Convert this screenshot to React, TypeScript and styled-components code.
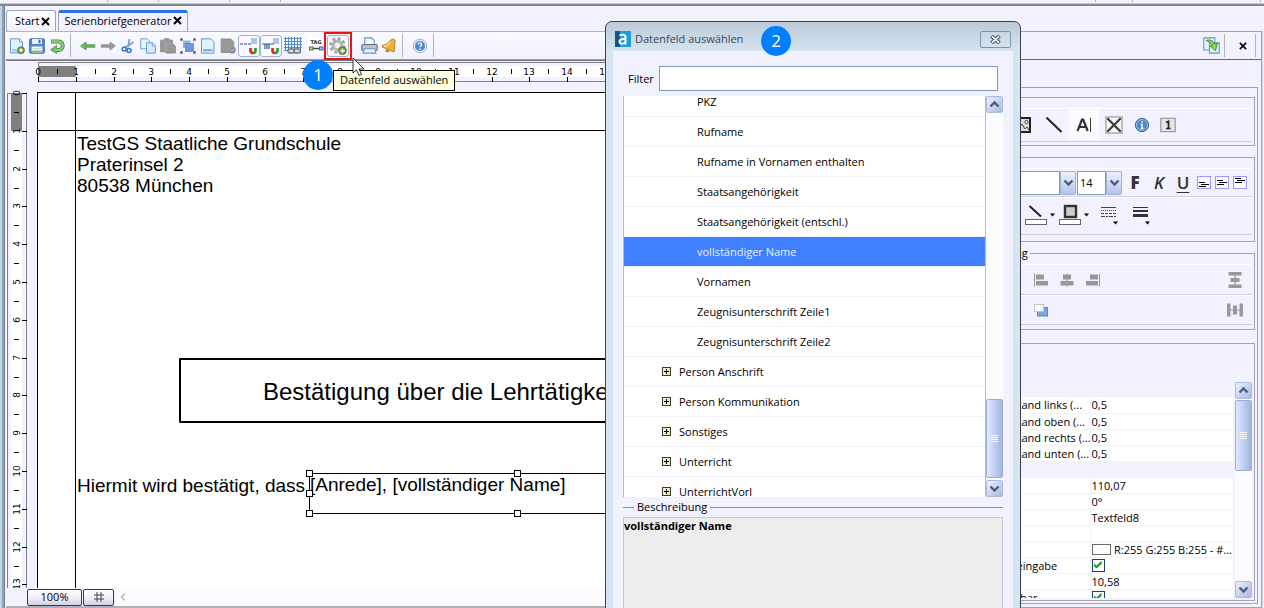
import React from 'react';
import styled, { createGlobalStyle, css } from 'styled-components';

const UI = '"Open Sans", "Noto Sans", sans-serif';
const PANE = '#f2f2ff';
const EDGE = '#94a6be';

const Global = createGlobalStyle`
  * { box-sizing: border-box; }
  body { margin: 0; background: ${PANE}; color: #000; font: 11px/16px ${UI}; overflow: hidden; }
  button, input, select { font: inherit; color: inherit; margin: 0; padding: 0; }
  button { border: 0; background: none; display: inline-flex; align-items: center; justify-content: center; }
  svg { display: block; flex: none; }
  ul { list-style: none; margin: 0; padding: 0; }
`;

/* ---------- window frame ---------- */

const Window = styled.div`
  position: relative;
  display: flex;
  flex-direction: column;
  height: 100vh;
  overflow: hidden;
`;

const MenuStrip = styled.div`
  flex: none;
  display: flex;
  height: 6px;
  padding-left: 107px;
  border-bottom: 2px solid #85858c;
  box-shadow: inset 0 -1px #c4c4cc;
`;

const StripTick = styled.span<{ $gap: number }>`
  flex: none;
  width: 1px;
  height: 2px;
  margin-right: ${(p) => p.$gap}px;
  background: #b4b4bc;
`;

const Frame = styled.div`
  flex: 1;
  min-height: 0;
  display: flex;
  flex-direction: column;
  border-left: 2px solid #bcd4ec;
  box-shadow: inset 2px 0 #8fa3b8, inset 3px 0 #7d7d86;
  padding-left: 4px;
`;

const TabBar = styled.nav`
  flex: none;
  display: flex;
  align-items: flex-end;
  gap: 2px;
  height: 25px;
`;

const Tab = styled.div<{ $active?: boolean }>`
  display: flex;
  align-items: center;
  gap: 1px;
  height: 21px;
  padding: 0 4px 0 8px;
  border: 1px solid ${EDGE};
  border-bottom: 0;
  border-radius: 3px 3px 0 0;
  background: linear-gradient(#ffffff, #f0f0fa);
  ${(p) =>
    p.$active &&
    css`
      padding: 0 4px 3px 5px;
      border-top: 3px solid #2f6fe8;
      background: ${PANE};
    `}
`;

const Main = styled.div`
  flex: 1;
  min-height: 0;
  display: flex;
`;

const Editor = styled.section`
  flex: 1;
  min-width: 0;
  display: flex;
  flex-direction: column;
  border-top: 1px solid #a3b8d0;
`;

/* ---------- toolbar ---------- */

const Toolbar = styled.div`
  flex: none;
  display: flex;
  align-items: center;
  height: 28px;
  padding-left: 1px;
  border-bottom: 1px solid #9a9aa2;
  background: linear-gradient(#fafaff, ${PANE});
`;

const ToolButton = styled.button<{ $w?: number; $framed?: boolean }>`
  flex: none;
  width: ${(p) => p.$w ?? 20}px;
  height: 22px;
  ${(p) =>
    p.$framed &&
    css`
      border: 1px solid #9fb2cc;
      border-radius: 3px;
      background: #fbfbff;
    `}
`;

const ToolSep = styled.span<{ $before?: number; $after?: number }>`
  flex: none;
  width: 1px;
  height: 23px;
  margin: 0 ${(p) => p.$after ?? 7}px 0 ${(p) => p.$before ?? 3}px;
  background: #b2b2ba;
`;

const Highlight = styled.div`
  position: relative;
  flex: none;
  display: flex;
  align-items: center;
  justify-content: center;
  width: 28px;
  height: 28px;
  margin: 0 7px 0 -3px;
  border: 2px solid #ee1111;
`;

const Tooltip = styled.div`
  position: absolute;
  z-index: 3;
  top: 36px;
  left: 7px;
  height: 21px;
  padding: 0 6px;
  border: 1px solid #000;
  background: #ffffe1;
  line-height: 18px;
  white-space: nowrap;
`;

const Badge = styled.span<{ $left: number; $top: number }>`
  position: absolute;
  z-index: 4;
  left: ${(p) => p.$left}px;
  top: ${(p) => p.$top}px;
  width: 30px;
  height: 30px;
  border-radius: 50%;
  background: #0080ff;
  color: #fff;
  font-size: 17px;
  line-height: 29px;
  text-align: center;
`;

const Pointer = styled.svg`
  position: absolute;
  z-index: 5;
  top: 23px;
  left: 26px;
`;

/* ---------- document ---------- */

const Sheet = styled.div`
  flex: 1;
  min-height: 0;
  display: grid;
  grid-template: 31px 1fr / 31px 1fr;
  border-top: 1px solid #77777f;
  overflow: hidden;
`;

const RulerSvg = styled.svg`
  overflow: visible;
  font-family: "DejaVu Sans", sans-serif;
  font-size: 9px;
`;

const Paper = styled.div`
  position: relative;
  z-index: 1;
  border: 1px solid #000;
  border-width: 1px 0 0 1px;
  background: #fff;
  font-family: "Liberation Sans", Arial, sans-serif;
  font-size: 19px;
  line-height: 21px;
  overflow: hidden;
  white-space: nowrap;
`;

const Guide = styled.span<{ $vertical?: boolean }>`
  position: absolute;
  background: #000;
  ${(p) =>
    p.$vertical ? 'left: 37px; top: 0; bottom: 0; width: 1px;' : 'top: 37px; left: 0; right: 0; height: 1px;'}
`;

const DocField = styled.div<{ $x: number; $y: number }>`
  position: absolute;
  left: ${(p) => p.$x}px;
  top: ${(p) => p.$y}px;
`;

const TitleField = styled(DocField)`
  width: 560px;
  height: 65px;
  padding-left: 82px;
  border: 2px solid #000;
  border-radius: 1px;
  font-size: 24px;
  line-height: 64px;
`;

const SelectedField = styled(DocField)`
  width: 417px;
  height: 41px;
  border: 1px solid #000;
`;

const Handle = styled.span<{ $col: number; $row: number }>`
  position: absolute;
  left: ${(p) => p.$col * 208 - 4}px;
  top: ${(p) => p.$row * 20 - 4}px;
  width: 7px;
  height: 7px;
  border: 1px solid #000;
  background: #fff;
`;

const StatusBar = styled.div`
  flex: none;
  display: flex;
  align-items: center;
  height: 20px;
  padding-left: 21px;
  border-bottom: 2px solid #b0b0bb;
  background: linear-gradient(90deg, ${PANE} 110px, #fbfbfe 110px);
`;

const StatusButton = styled.button<{ $w: number }>`
  width: ${(p) => p.$w}px;
  height: 17px;
  margin-right: 1px;
  border: 1px solid #1c3f78;
  border-radius: 2px;
  background: linear-gradient(#ffffff, #ececf6 60%, #cfcfe0);
`;

/* ---------- scroll bars ---------- */

const ScrollTrack = styled.div`
  flex: none;
  display: flex;
  flex-direction: column;
  width: 17px;
  background: #fcfcff;
`;

const ScrollButton = styled.button`
  height: 17px;
  border: 1px solid #a9bbdf;
  border-radius: 2px;
  background: linear-gradient(135deg, #eef2ff, #a9b8de);
`;

const ScrollThumb = styled.div<{ $before: string; $height: number }>`
  height: ${(p) => p.$height}px;
  margin: ${(p) => p.$before} 0 2px;
  display: flex;
  align-items: center;
  justify-content: center;
  border: 1px solid #98add8;
  border-radius: 2px;
  background: linear-gradient(90deg, #e3eafe, #c3d1f8 45%, #a5b4d6);
`;

/* ---------- side panel ---------- */

const Side = styled.aside`
  flex: none;
  width: 302px;
  margin-right: 2px;
  display: flex;
  flex-direction: column;
  border: 1px solid ${EDGE};
  border-left: 0;
  box-shadow: 1px 0 #cfd6e2;
`;

const SideHeader = styled.header`
  flex: none;
  display: flex;
  align-items: center;
  justify-content: flex-end;
  height: 28px;
  padding-right: 5px;
  border-bottom: 1px solid #66666c;
`;

const SideBody = styled.div`
  flex: 1;
  min-height: 0;
  display: flex;
  flex-direction: column;
  gap: 11px;
  margin: 27px 3px 3px 4px;
  padding: 9px 2px 2px 2px;
  border: 1px solid ${EDGE};
`;

const Group = styled.fieldset<{ $h?: number }>`
  flex: ${(p) => (p.$h ? 'none' : '1')};
  height: ${(p) => (p.$h ? p.$h + 'px' : 'auto')};
  min-height: 0;
  min-width: 0;
  margin: ${(p) => (p.$h ? 0 : 2)}px 0 0;
  padding: 10px 2px 2px 1px;
  border: 1px solid #a4a4b0;
  position: relative;
  display: flex;
  flex-direction: column;
`;

/* sits over the border line of its group */
const GroupName = styled.span`
  position: absolute;
  top: -9px;
  left: -4px;
  padding: 0 2px;
  background: ${PANE};
`;

const ToolRow = styled.div<{ $h: number }>`
  flex: none;
  display: flex;
  align-items: center;
  height: ${(p) => p.$h}px;
  border-top: 1px solid #fff;
  border-bottom: 1px solid #d0d0df;
`;

const Spring = styled.span`
  flex: 1;
`;

const Cell = styled.button<{ $w: number; $lit?: boolean }>`
  flex: none;
  width: ${(p) => p.$w}px;
  height: 30px;
  background: ${(p) => (p.$lit ? '#fbfbff' : 'none')};
`;

const Letter = styled(Cell)<{ $kind: 'bold' | 'italic' | 'underline' }>`
  color: #333;
  font-size: 17px;
  font-weight: ${(p) => (p.$kind === 'bold' ? 800 : 600)};
  font-style: ${(p) => (p.$kind === 'italic' ? 'italic' : 'normal')};
  text-decoration: ${(p) => (p.$kind === 'underline' ? 'underline' : 'none')};
  text-underline-offset: 3px;
`;

const Combo = styled.label<{ $w: number }>`
  flex: none;
  display: flex;
  width: ${(p) => p.$w}px;
  height: 24px;
  margin-right: 1px;
`;

const ComboSelect = styled.select`
  flex: 1;
  min-width: 0;
  appearance: none;
  border: 1px solid #7f9db9;
  border-radius: 0;
  background: #fff;
  padding-left: 2px;
`;

const ComboArrow = styled.span`
  width: 16px;
  display: flex;
  align-items: center;
  justify-content: center;
  border: 1px solid #9fb2d8;
  border-radius: 2px;
  background: linear-gradient(#eef2ff, #b4c2e4);
`;

const PropArea = styled.div`
  flex: 1;
  min-height: 0;
  display: flex;
  gap: 2px;
  margin-top: 28px;
`;

const PropViewport = styled.div`
  flex: 1;
  min-width: 0;
  overflow: hidden;
`;

const PropTable = styled.table`
  width: 100%;
  margin-top: 15px;
  table-layout: fixed;
  border-collapse: collapse;
  white-space: nowrap;

  th, td {
    height: 16px;
    padding: 0 1px;
    border-bottom: 1px solid ${PANE};
    background: #fff;
    font-weight: 400;
    line-height: 15px;
    text-align: left;
    overflow: hidden;
  }
  th { width: 121px; border-right: 1px solid ${PANE}; }
`;

const PropCategory = styled.td`
  && { background: ${PANE}; }
`;

const Inline = styled.span`
  display: flex;
  align-items: center;
  gap: 3px;
`;

const Swatch = styled.span`
  width: 21px;
  height: 11px;
  border: 1px solid #6a6a6a;
  background: #fff;
`;

const Tick = styled.input`
  display: block;
  appearance: none;
  width: 13px;
  height: 13px;
  border: 1px solid #1c3f78;
  background: #fff;
  &:checked::before {
    content: '';
    display: block;
    width: 9px;
    height: 9px;
    margin: 1px;
    background: #21a121;
    clip-path: polygon(0 30%, 35% 55%, 90% 0, 90% 35%, 35% 90%, 0 60%);
  }
`;

/* ---------- field dialog ---------- */

const Dialog = styled.div`
  position: absolute;
  z-index: 6;
  left: 605px;
  top: 21px;
  bottom: -8px;
  width: 416px;
  display: flex;
  flex-direction: column;
  padding: 0 7px;
  border: 1px solid #3c4148;
  border-radius: 7px 7px 0 0;
  background: linear-gradient(#bccad8, #d6e5f1 30px, #d6e5f1);
`;

const DialogTitle = styled.header`
  flex: none;
  display: flex;
  align-items: center;
  gap: 4px;
  height: 29px;
  padding: 5px 2px 0 2px;
  color: #3f4650;
`;

const DialogName = styled.h1`
  flex: 1;
  margin: 0;
  font-size: 11px;
  font-weight: 400;
`;

const CloseButton = styled.button`
  width: 31px;
  height: 17px;
  border: 1px solid #7f93b0;
  border-radius: 2px;
  background: linear-gradient(#c8d6e4, #d5e2ee);
`;

const DialogBody = styled.div`
  flex: 1;
  min-height: 0;
  display: flex;
  flex-direction: column;
  padding: 15px 10px 0;
  background: ${PANE};
`;

const FilterRow = styled.label`
  flex: none;
  display: flex;
  align-items: center;
  gap: 5px;
  height: 25px;
  margin: 0 5px 5px;
`;

const FilterInput = styled.input`
  flex: 1;
  height: 25px;
  border: 1px solid #7f9db9;
  background: #fff;
`;

const TreeBox = styled.div`
  flex: none;
  display: flex;
  height: 401px;
`;

const TreeViewport = styled.div`
  flex: 1;
  border: 1px solid #bcbcc4;
  border-width: 0 1px;
  background: #fff;
  overflow: hidden;
`;

const Tree = styled.ul`
  margin-top: -9px;
`;

const TreeItem = styled.li<{ $leaf?: boolean; $selected?: boolean }>`
  display: flex;
  align-items: center;
  gap: 8px;
  height: 30px;
  padding-left: ${(p) => (p.$leaf ? 73 : 38)}px;
  border-bottom: 1px solid #f0f0fa;
  ${(p) => p.$selected && 'background: #3f80ff; color: #e8f0ff;'}
`;

const Expander = styled.button`
  width: 9px;
  height: 9px;
`;

const DescriptionHead = styled.h2`
  flex: none;
  display: flex;
  align-items: center;
  gap: 3px;
  height: 20px;
  margin: 0;
  font-size: 11px;
  font-weight: 400;
  &::before, &::after { content: ''; height: 1px; background: #94949e; }
  &::before { width: 11px; }
  &::after { flex: 1; }
`;

const Description = styled.div`
  flex: 1;
  border: 1px solid #c9c9d2;
  background: #ededed;
  font-weight: 700;
`;

/* ---------- icons ---------- */

type Kids = { children: React.ReactNode; size?: number };
const Icon = ({ children, size = 16 }: Kids) => (
  <svg width={size} height={size} viewBox="0 0 16 16" fill="none" aria-hidden="true">
    {children}
  </svg>
);

const Cross = ({ size = 9, weight = 2 }: { size?: number; weight?: number }) => (
  <svg width={size} height={size} viewBox="0 0 9 9" stroke="#000" strokeWidth={weight} aria-hidden="true">
    <path d="M1 1l7 7M8 1l-7 7" />
  </svg>
);

const Chevron = ({ up }: { up?: boolean }) => (
  <svg width="11" height="9" viewBox="0 0 11 9" fill="none" stroke="#465c85" strokeWidth="2.4" aria-hidden="true">
    <path d={up ? 'M1.5 6.5L5.5 2.5L9.5 6.5' : 'M1.5 2.5L5.5 6.5L9.5 2.5'} />
  </svg>
);

const Grip = () => (
  <svg width="7" height="8" stroke="#f4f8ff" aria-hidden="true">
    <path d="M0 .5h7M0 2.5h7M0 4.5h7M0 6.5h7" />
  </svg>
);

const Plus = () => (
  <>
    <circle cx="12" cy="12.2" r="3.5" fill="#6b9a33" stroke="#48731c" strokeWidth=".6" />
    <path d="M12 10.2v4M10 12.2h4" stroke="#fff" strokeWidth="1.3" />
  </>
);

const NewIcon = () => (
  <Icon>
    <path d="M1.5.8h9l3 3v11h-12z" fill="#e3f1fd" stroke="#6498cf" />
    <path d="M10.500.8v3h3" fill="#fff" stroke="#6498cf" />
    <path d="M3 11h9v2.500H3z" fill="#a9d2f4" />
    <Plus />
  </Icon>
);
const SaveIcon = () => (
  <Icon>
    <rect x=".7" y=".8" width="14.600" height="14.400" rx="1" fill="#4f86cb" stroke="#376cb0" />
    <rect x="3" y="1" width="10" height="5" fill="#e6f0fb" />
    <rect x="9.500" y="1.600" width="2" height="3.600" fill="#4171b0" />
    <rect x="2.600" y="8.500" width="10.800" height="6" fill="#f5f9ff" />
    <path d="M3 13.500h10" stroke="#8cc069" strokeWidth="2" />
    <path d="M4 10.500h8" stroke="#c3d3e8" />
  </Icon>
);
const UndoIcon = () => (
  <Icon>
    <path d="M2 3.500h7.500a4 4 0 0 1 0 8.500H6" stroke="#3f8c3c" strokeWidth="4" />
    <path d="M7.500 7.500v8L1.500 11.800z" fill="#6dba62" stroke="#3f8c3c" strokeWidth=".7" />
    <path d="M2.500 3.500h7a4 4 0 0 1 0 8.300H6" stroke="#8cd07d" strokeWidth="2.300" />
  </Icon>
);
const ArrowIcon = ({ right }: { right?: boolean }) => (
  <Icon>
    <path
      d={right ? 'M15.300 8L10 4v2.800H1.200v2.400H10V12z' : 'M.7 8L6 4v2.800h8.800v2.400H6V12z'}
      fill={right ? '#9a9a9a' : '#72bd66'}
      stroke={right ? '#8a8a8a' : '#3d8a3a'}
      strokeWidth=".8"
    />
  </Icon>
);
const CutIcon = () => (
  <Icon>
    <path d="M9.500 1L8 9M13.500 4L5 10" stroke="#7d9fc6" strokeWidth="1.700" />
    <circle cx="4.300" cy="11" r="2" stroke="#3979c4" strokeWidth="1.600" />
    <circle cx="9" cy="12.500" r="2" stroke="#3979c4" strokeWidth="1.600" />
  </Icon>
);
const CopyIcon = () => (
  <Icon>
    <path d="M.7.800h6.500l2.300 2.500v7.500H.7z" fill="#edf6ff" stroke="#6b9ed3" />
    <path d="M6.500 4.800h6l2.800 2.700v7.700H6.500z" fill="#d7ebfc" stroke="#6b9ed3" />
    <path d="M12.300 4.800v3h3" fill="#fff" stroke="#6b9ed3" />
  </Icon>
);
const PasteIcon = () => (
  <Icon>
    <path d="M.7 2.200h3l1-1.500h4l1 1.500h2.600v3l3 2.800v7H6v-1.200H.7z" fill="#999" stroke="#8a8a8a" />
    <path d="M6 14V5.500h6" stroke="#aaa" />
  </Icon>
);
const GroupIcon = () => (
  <Icon>
    <rect x="3" y="2.500" width="7.500" height="7.500" fill="#8fb0e6" />
    <rect x="5.500" y="5.500" width="8" height="8" fill="#6f98de" stroke="#5780c8" strokeWidth=".7" />
    <path d="M.3.300h2.400v2.400H.3zM13.300.300h2.400v2.400h-2.400zM.3 13.300h2.400v2.400H.3zM13.300 13.300h2.400v2.400h-2.400z" fill="#555" />
  </Icon>
);
const PageIcon = () => (
  <Icon>
    <path d="M1.500.8h9.500l3 3v11.400h-12.500z" fill="#e3f1fd" stroke="#6498cf" />
    <path d="M3 11h9.500v2.500H3z" fill="#7fb6ea" />
  </Icon>
);
const RemoveIcon = () => (
  <Icon>
    <path d="M1.200 1h9.500l3 3v10.500H1.200z" fill="#9a9a9a" stroke="#8a8a8a" />
    <circle cx="12.300" cy="12" r="3.400" fill="#8b8b8b" stroke="#a8a8a8" strokeWidth=".6" />
    <path d="M10.300 12h4" stroke="#bbb" strokeWidth="1.300" />
  </Icon>
);
const Magnet = () => (
  <g strokeWidth="2.600">
    <path d="M11.500 6v3.500a2.500 2.500 0 0 0 2.500 2.500" stroke="#e32020" />
    <path d="M14 12a2.500 2.500 0 0 0 2.500-2.500V6" stroke="#23a023" />
    <path d="M11.500 5v2M16.500 5v2" stroke="#fff" />
  </g>
);
const SnapGuideIcon = () => (
  <svg width="20" height="18" viewBox="0 0 20 18" fill="none" aria-hidden="true">
    <rect x="12" y="1" width="6" height="6" fill="#a9c6ec" />
    <path d="M1 7h12" stroke="#1f3fd0" strokeDasharray="3 1" />
    <g transform="translate(0 4)"><Magnet /></g>
  </svg>
);
const SnapObjectIcon = () => (
  <svg width="20" height="18" viewBox="0 0 20 18" fill="none" aria-hidden="true">
    <rect x="12" y="1" width="6" height="6" fill="#a9c6ec" />
    <rect x="3" y="7" width="6" height="5" fill="#6e9ee0" />
    <path d="M1 7h12" stroke="#456" />
    <g transform="translate(0 4)"><Magnet /></g>
  </svg>
);
const GridIcon = () => (
  <svg width="18" height="18" viewBox="0 0 18 18" fill="none" aria-hidden="true">
    <path d="M1.500 0v14M4.500 0v14M7.500 0v14M10.500 0v14M13.500 0v14M16.500 0v14M0 1.500h18M0 4.500h18M0 7.500h18M0 10.500h18M0 13.500h6" stroke="#4c8fce" />
    <rect x="4" y="12" width="6.500" height="4" rx="2" stroke="#777" strokeWidth="1.500" fill="#ddd" />
    <rect x="10" y="12" width="6.500" height="4" rx="2" stroke="#777" strokeWidth="1.500" fill="#ddd" />
  </svg>
);
const TagIcon = () => (
  <svg width="16" height="18" viewBox="0 0 16 18" fill="none" aria-hidden="true">
    <rect width="16" height="18" fill="#fff" />
    <text x="8" y="7" textAnchor="middle" fontFamily="DejaVu Sans" fontWeight="700" fontSize="5" fill="#222">TAG</text>
    <path d="M5 11.500h6" stroke="#345" strokeWidth="1.400" />
    <rect x="1.500" y="10" width="3.500" height="3" fill="#bfe08a" stroke="#4a7c2a" />
    <rect x="11.500" y="10" width="3.500" height="3" fill="#9cd0f0" stroke="#2a6c9c" />
  </svg>
);
const GearIcon = () => (
  <Icon size={18}>
    <circle cx="7.500" cy="7.500" r="6" stroke="#a2a2a2" strokeWidth="2.600" strokeDasharray="2.700 2.012" />
    <circle cx="7.500" cy="7.500" r="3.800" stroke="#b4b4b4" strokeWidth="2.800" fill="#f4f4f4" />
    <Plus />
  </Icon>
);
const PrintIcon = () => (
  <Icon size={17}>
    <path d="M3.500 7V.8h6.500l2.500 2.500V7" fill="#f2f8ff" stroke="#6d93bf" />
    <rect x=".7" y="7" width="14.600" height="6" rx="1.500" fill="#b9c3d0" stroke="#5f6b7a" />
    <path d="M3 11h10l1 4.200H2z" fill="#e8f3fd" stroke="#6d93bf" />
  </Icon>
);
const BellIcon = () => (
  <Icon>
    <path d="M12.500 1.200c1.500.2 2 1.300 1.700 2.300-.7 3-1.200 5.500-.5 9l-1 1.500L1 8.800l.5-1.500c3.500-.5 5-1.500 7-4 1-1.300 2.400-2.300 4-2.100z" fill="#eeb03c" stroke="#b87818" strokeWidth=".9" />
    <path d="M9 4c-1.500 2.500-3.500 4-6 4.500" stroke="#ffe2a0" strokeWidth="1.400" />
    <ellipse cx="6.500" cy="12.800" rx="2.200" ry="1.800" fill="#c98a22" />
  </Icon>
);
const HelpIcon = () => (
  <Icon>
    <circle cx="8" cy="8" r="6.800" fill="#dfe9f5" stroke="#9db4d2" />
    <circle cx="8" cy="8" r="5" fill="#4f86c8" />
    <path d="M6.300 6.500c0-2.200 3.400-2.200 3.400 0C9.700 7.800 8 7.800 8 9.300M8 10.300v1.400" stroke="#fff" strokeWidth="1.300" />
  </Icon>
);
const RefreshIcon = () => (
  <Icon size={17}>
    <path d="M.7.800h10.500v11.500H.7z" fill="#e8f3fd" stroke="#5f98d4" />
    <path d="M6 5.500h9.300v9.700H6z" fill="#dcecfb" stroke="#5f98d4" />
    <path d="M2.800 3.200c4-1 7 0 8 3.600l2.700-1-1.700 7-5.300-4.300 2.400-.7c-1-2.200-3-3.200-6.100-4.600z" fill="#8fdc3a" stroke="#3a8a1e" strokeWidth=".8" />
  </Icon>
);
const ImageIcon = () => (
  <Icon>
    <rect x="1" y="1" width="13" height="14" fill="#ddd" stroke="#222" strokeWidth="2" />
    <path d="M3 11l3-4 3 5 2-2 2 3" stroke="#444" />
    <circle cx="10.500" cy="5" r="1.600" fill="#fff" stroke="#444" />
  </Icon>
);
const LineIcon = () => (
  <Icon>
    <path d="M.5.5l15 14.500" stroke="#222" strokeWidth="2" />
  </Icon>
);
const TextToolIcon = () => (
  <Icon>
    <path d="M1.500 14L6 2.500h1.200L11.700 14M3.300 10h6.600" stroke="#333" strokeWidth="2.200" />
    <path d="M14.500 1v14" stroke="#333" />
  </Icon>
);
const BoxCrossIcon = () => (
  <Icon size={18}>
    <rect x=".8" y=".8" width="14.400" height="14.400" fill="#f4f4f4" stroke="#b8b8b8" strokeWidth="1.600" />
    <path d="M2 2l12 12M14 2L2 14" stroke="#3a3a3a" strokeWidth="1.900" />
  </Icon>
);
const InfoIcon = () => (
  <Icon>
    <circle cx="8" cy="8" r="6.600" fill="#4f86c8" stroke="#33609c" />
    <circle cx="8" cy="8" r="5.500" stroke="#9dc0ea" />
    <path d="M8 6.700v5M8 4v1.600M6.800 7.200H8M6.600 11.500h2.800" stroke="#fff" strokeWidth="1.400" />
  </Icon>
);
const OneIcon = () => (
  <Icon>
    <rect x=".8" y="1.300" width="14.400" height="13.400" fill="#e4e4e4" stroke="#8c8c8c" />
    <path d="M6 5.500l2.500-1.200v7.200M6 11.500h4.500" stroke="#222" strokeWidth="1.700" />
  </Icon>
);
const TextAlignIcon = ({ y }: { y: number }) => (
  <svg width="14" height="13" viewBox="0 0 14 13" fill="none" aria-hidden="true">
    <rect x=".5" y=".5" width="13" height="12" fill="#fafaff" stroke="#9a9aff" />
    <path d={`M2 ${y}h6M4 ${y + 2}h8M2 ${y + 4}h7`} stroke="#000" />
  </svg>
);
const DropIcon = ({ kind }: { kind: 'line' | 'fill' | 'dash' | 'weight' }) => (
  <svg width="30" height="24" viewBox="0 0 30 24" fill="none" aria-hidden="true">
    {kind === 'line' && <path d="M4.500 2L16 12.500" stroke="#222" strokeWidth="2" />}
    {kind === 'fill' && <rect x="6" y="2" width="11" height="11" fill="#ccc" stroke="#333" strokeWidth="2.400" />}
    {(kind === 'line' || kind === 'fill') && (
      <>
        <rect x=".5" y="15.500" width="21" height="5" fill="#fff" stroke="#666" />
        <path d="M25 9.500h5l-2.500 3z" fill="#000" />
      </>
    )}
    {kind === 'dash' && (
      <>
        <path d="M8 3.500h15" stroke="#444" />
        <path d="M8 6.500h15" stroke="#444" strokeDasharray="1 1" />
        <path d="M8 9.500h15" stroke="#444" strokeDasharray="3 1" />
        <path d="M8 12.500h15" stroke="#444" strokeDasharray="4 1 2 1" />
      </>
    )}
    {kind === 'weight' && (
      <>
        <path d="M8 3.500h15" stroke="#333" />
        <path d="M8 7h15" stroke="#333" strokeWidth="2" />
        <path d="M8 11.500h15" stroke="#333" strokeWidth="3" />
      </>
    )}
    {(kind === 'dash' || kind === 'weight') && <path d="M20 17.500h5l-2.500 3z" fill="#000" />}
  </svg>
);
const ArrangeIcon = ({ kind }: { kind: 'left' | 'center' | 'right' | 'spreadY' | 'spreadX' | 'front' | 'back' }) => (
  <Icon>
    {kind === 'left' && <path d="M1 1.500h1v13H1zM3 2.500h8v5H3zM3 9h12v4.500H3z" fill="#989898" />}
    {kind === 'center' && <path d="M7.500 1.500h1v13h-1zM4 2.500h8v5H4zM1.500 9h13v4.500h-13z" fill="#989898" />}
    {kind === 'right' && <path d="M14 1.500h1v13h-1zM5 2.500h8v5H5zM1 9h12v4.500H1z" fill="#989898" />}
    {kind === 'spreadY' && <path d="M1.500 0h13v3.500h-13zM3.500 6h9v4h-9zM1.500 12.500h13V16h-13zM7.500 3h1.200v10H7.500z" fill="#989898" />}
    {kind === 'spreadX' && <path d="M0 1.500h3.500v13H0zM6 3.500h4v9H6zM12.500 1.500H16v13h-3.500zM3 7.400h10v1.200H3z" fill="#989898" />}
    {kind === 'back' && <path d="M1 3h9v8H1z" fill="#c9c9cf" />}
    {kind === 'front' && (
      <>
        <rect x="4.500" y="5.500" width="10" height="8.500" fill="#7ea6e6" stroke="#5c86cf" />
        <rect x="1.500" y="2.500" width="9" height="7" fill="#fafafa" stroke="#c4c4c4" />
      </>
    )}
  </Icon>
);

/* ---------- rulers ---------- */

const CM = 37.8;
const Ruler = ({ vertical, count }: { vertical?: boolean; count: number }) => {
  const marks = Array.from({ length: count }, (_, i) => i);
  if (vertical) {
    return (
      <RulerSvg width="31" height="100%" aria-hidden="true">
        <rect x="5" y="1" width="11" height="2000" fill="#fff" />
        <rect x="5" y="1" width="11" height={CM} fill="#808080" />
        <path d="M1.500 2000V1.500H20.500V2000" fill="none" stroke="#808086" />
        {marks.map((n) => {
          const y = Math.round(1 + n * CM);
          return (
            <React.Fragment key={n}>
              <text x={0} y={0} transform={`translate(14 ${y}) rotate(-90)`} textAnchor="middle">{n}</text>
              <path d={`M16 ${y + 0.5}h5M8 ${y + 19.5}h5`} stroke="#000" />
            </React.Fragment>
          );
        })}
      </RulerSvg>
    );
  }
  return (
    <RulerSvg width="100%" height="31" aria-hidden="true">
      <rect x="1" y="5" width="2000" height="11" fill="#fff" />
      <rect x="1" y="5" width={CM} height="11" fill="#808080" />
      <path d="M2000 1.500H1.500V20.500H2000" fill="none" stroke="#808086" />
      {marks.map((n) => {
        const x = Math.round(1 + n * CM);
        return (
          <React.Fragment key={n}>
            <text x={x} y="14" textAnchor="middle">{n}</text>
            <path d={`M${x + 0.5} 16v5M${x + 19.5} 8v5`} stroke="#000" />
          </React.Fragment>
        );
      })}
    </RulerSvg>
  );
};

/* ---------- data ---------- */

const leaves = [
  'PKZ', 'Rufname', 'Rufname in Vornamen enthalten', 'Staatsangehörigkeit', 'Staatsangehörigkeit (entschl.)',
  'vollständiger Name', 'Vornamen', 'Zeugnisunterschrift Zeile1', 'Zeugnisunterschrift Zeile2',
];
const branches = ['Person Anschrift', 'Person Kommunikation', 'Sonstiges', 'Unterricht', 'UnterrichtVorl'];

const paddings: [string, string][] = [
  ['Innenabstand links (...', '0,5'],
  ['Innenabstand oben (...', '0,5'],
  ['Innenabstand rechts (...', '0,5'],
  ['Innenabstand unten (...', '0,5'],
];

const general: [string, React.ReactNode][] = [
  ['Breite', '110,07'],
  ['Drehung', '0°'],
  ['Feldname', 'Textfeld8'],
  ['Format', ''],
  ['Füllfarbe', <Inline key="c"><Swatch />R:255 G:255 B:255 - #...</Inline>],
  ['Benutzereingabe', <Tick key="t" type="checkbox" defaultChecked aria-label="Benutzereingabe" />],
  ['Höhe', '10,58'],
  ['Verschiebbar', <Tick key="v" type="checkbox" defaultChecked aria-label="Verschiebbar" />],
];

const ScrollBar = ({ before, height }: { before: string; height: number }) => (
  <ScrollTrack>
    <ScrollButton aria-label="Nach oben"><Chevron up /></ScrollButton>
    <ScrollThumb $before={before} $height={height}><Grip /></ScrollThumb>
    {before !== 'auto' && <Spring />}
    <ScrollButton aria-label="Nach unten"><Chevron /></ScrollButton>
  </ScrollTrack>
);

const MainToolbar = () => (
  <Toolbar role="toolbar">
    <ToolButton aria-label="Neu"><NewIcon /></ToolButton>
    <ToolButton aria-label="Speichern"><SaveIcon /></ToolButton>
    <ToolButton aria-label="Rückgängig"><UndoIcon /></ToolButton>
    <ToolSep />
    <ToolButton aria-label="Zurück"><ArrowIcon /></ToolButton>
    <ToolButton aria-label="Vor"><ArrowIcon right /></ToolButton>
    <ToolButton aria-label="Ausschneiden"><CutIcon /></ToolButton>
    <ToolButton aria-label="Kopieren"><CopyIcon /></ToolButton>
    <ToolButton aria-label="Einfügen"><PasteIcon /></ToolButton>
    <ToolButton aria-label="Gruppieren"><GroupIcon /></ToolButton>
    <ToolButton aria-label="Seite"><PageIcon /></ToolButton>
    <ToolButton aria-label="Seite entfernen"><RemoveIcon /></ToolButton>
    <ToolButton $w={22} $framed aria-label="An Hilfslinien ausrichten"><SnapGuideIcon /></ToolButton>
    <ToolButton $w={22} $framed aria-label="An Objekten ausrichten"><SnapObjectIcon /></ToolButton>
    <ToolButton $w={22} aria-label="Raster"><GridIcon /></ToolButton>
    <ToolButton $w={23} aria-label="Tag"><TagIcon /></ToolButton>
    <Highlight>
      <ToolButton $w={22} $framed aria-label="Datenfeld auswählen"><GearIcon /></ToolButton>
      <Tooltip role="tooltip">Datenfeld auswählen</Tooltip>
      <Badge $left={-23} $top={26}>1</Badge>
      <Pointer width="13" height="20" viewBox="0 0 13 20" aria-hidden="true">
        <path d="M1 1v15l3.500-3.200L7 18.500l2.500-1.100L7 12h5z" fill="#fff" stroke="#333" />
      </Pointer>
    </Highlight>
    <ToolButton aria-label="Drucken"><PrintIcon /></ToolButton>
    <ToolButton aria-label="Erinnerung"><BellIcon /></ToolButton>
    <ToolSep />
    <ToolButton aria-label="Hilfe"><HelpIcon /></ToolButton>
    <ToolSep />
  </Toolbar>
);

const SidePanel = () => (
  <Side>
    <SideHeader>
      <ToolButton aria-label="Aktualisieren"><RefreshIcon /></ToolButton>
      <ToolSep $after={13} />
      <ToolButton $w={9} aria-label="Schließen"><Cross size={8} weight={1.8} /></ToolButton>
      <ToolSep $before={8} $after={0} />
    </SideHeader>
    <SideBody>
      <Group $h={49}>
        <ToolRow $h={34}>
          <Cell $w={40} aria-label="Auswahl" />
          <Cell $w={30} aria-label="Bild"><ImageIcon /></Cell>
          <Cell $w={30} aria-label="Linie"><LineIcon /></Cell>
          <Cell $w={30} $lit aria-label="Textfeld"><TextToolIcon /></Cell>
          <Cell $w={30} aria-label="Ankreuzfeld"><BoxCrossIcon /></Cell>
          <Cell $w={26} aria-label="Information"><InfoIcon /></Cell>
          <Cell $w={26} aria-label="Seitenzahl"><OneIcon /></Cell>
        </ToolRow>
      </Group>
      <Group $h={85}>
        <ToolRow $h={29}>
          <Combo $w={107}>
            <ComboSelect aria-label="Schriftart"><option>Arial</option></ComboSelect>
            <ComboArrow><Chevron /></ComboArrow>
          </Combo>
          <Combo $w={45}>
            <ComboSelect aria-label="Schriftgröße"><option>14</option></ComboSelect>
            <ComboArrow><Chevron /></ComboArrow>
          </Combo>
          <Letter $w={24} $kind="bold">F</Letter>
          <Letter $w={24} $kind="italic">K</Letter>
          <Letter $w={24} $kind="underline">U</Letter>
          <Cell $w={18} aria-label="Unten"><TextAlignIcon y={6.5} /></Cell>
          <Cell $w={18} aria-label="Mitte"><TextAlignIcon y={4.5} /></Cell>
          <Cell $w={18} aria-label="Oben"><TextAlignIcon y={2.5} /></Cell>
        </ToolRow>
        <ToolRow $h={38}>
          <Cell $w={51} aria-label="Rahmen" />
          <Cell $w={40} aria-label="Linienfarbe"><DropIcon kind="line" /></Cell>
          <Cell $w={28} aria-label="Füllfarbe"><DropIcon kind="fill" /></Cell>
          <Cell $w={40} aria-label="Linienart"><DropIcon kind="dash" /></Cell>
          <Cell $w={24} aria-label="Linienstärke"><DropIcon kind="weight" /></Cell>
        </ToolRow>
      </Group>
      <Group $h={77}>
        <GroupName>Ausrichtung</GroupName>
        <ToolRow $h={31}>
          <Cell $w={59} aria-label="Verteilen" />
          <Cell $w={26} aria-label="Links ausrichten"><ArrangeIcon kind="left" /></Cell>
          <Cell $w={26} aria-label="Zentrieren"><ArrangeIcon kind="center" /></Cell>
          <Cell $w={26} aria-label="Rechts ausrichten"><ArrangeIcon kind="right" /></Cell>
          <Spring />
          <Cell $w={34} aria-label="Vertikal verteilen"><ArrangeIcon kind="spreadY" /></Cell>
        </ToolRow>
        <ToolRow $h={30}>
          <Cell $w={33} aria-label="Ebene" />
          <Cell $w={26} aria-label="Nach hinten"><ArrangeIcon kind="back" /></Cell>
          <Cell $w={26} aria-label="Nach vorne"><ArrangeIcon kind="front" /></Cell>
          <Spring />
          <Cell $w={34} aria-label="Horizontal verteilen"><ArrangeIcon kind="spreadX" /></Cell>
        </ToolRow>
      </Group>
      <Group>
        <GroupName>Attribute</GroupName>
        <PropArea>
          <PropViewport>
            <PropTable>
              <tbody>
                {paddings.map(([name, value]) => (
                  <tr key={name}><th scope="row">{name}</th><td>{value}</td></tr>
                ))}
                <tr><PropCategory colSpan={2} /></tr>
                {general.map(([name, value]) => (
                  <tr key={name}><th scope="row">{name}</th><td>{value}</td></tr>
                ))}
              </tbody>
            </PropTable>
          </PropViewport>
          <ScrollBar before="1px" height={71} />
        </PropArea>
      </Group>
    </SideBody>
  </Side>
);

const FieldDialog = () => (
  <Dialog role="dialog" aria-label="Datenfeld auswählen">
    <DialogTitle>
      <svg width="16" height="16" viewBox="0 0 16 16" fill="none" aria-hidden="true">
        <rect width="16" height="16" fill="#1d9ed8" />
        <rect width="5" height="16" fill="#17548a" />
        <path d="M4.500 4.500c2-1.300 6-1.300 6 1.500v7.500M10.500 7.800c-3 0-6 .3-6 2.700 0 3 4.500 2.600 6 .5" stroke="#fff" strokeWidth="2" />
      </svg>
      <DialogName>Datenfeld auswählen</DialogName>
      <CloseButton aria-label="Schließen">
        <svg width="11" height="9" viewBox="0 0 11 9" fill="none" aria-hidden="true">
          <path d="M1.500 1l8 7M9.500 1l-8 7" stroke="#4e5866" strokeWidth="3.800" />
          <path d="M2 1.400l7 6.200M9 1.400L2 7.600" stroke="#fff" strokeWidth="1.600" />
        </svg>
      </CloseButton>
    </DialogTitle>
    <Badge $left={155} $top={4}>2</Badge>
    <DialogBody>
      <FilterRow>
        Filter
        <FilterInput type="text" />
      </FilterRow>
      <TreeBox>
        <TreeViewport>
          <Tree>
            {leaves.map((name) => (
              <TreeItem key={name} $leaf $selected={name === 'vollständiger Name'}>{name}</TreeItem>
            ))}
            {branches.map((name) => (
              <TreeItem key={name}>
                <Expander aria-label={`${name} aufklappen`}>
                  <svg width="9" height="9" aria-hidden="true">
                    <rect x=".5" y=".5" width="8" height="8" fill="#f3ecc4" stroke="#3c3a2c" />
                    <path d="M2 4.500h5M4.500 2v5" stroke="#000" />
                  </svg>
                </Expander>
                {name}
              </TreeItem>
            ))}
          </Tree>
        </TreeViewport>
        <ScrollBar before="auto" height={79} />
      </TreeBox>
      <DescriptionHead>Beschreibung</DescriptionHead>
      <Description>vollständiger Name</Description>
    </DialogBody>
  </Dialog>
);

export default function App() {
  return (
    <Window>
      <Global />
      <MenuStrip>
        <StripTick $gap={50} />
        <StripTick $gap={70} />
        <StripTick $gap={50} />
        <StripTick $gap={814} />
        <StripTick $gap={36} />
        <StripTick $gap={127} />
        <StripTick $gap={0} />
      </MenuStrip>
      <Frame>
        <TabBar>
          <Tab>Start<ToolButton $w={11} aria-label="Start schließen"><Cross /></ToolButton></Tab>
          <Tab $active>
            Serienbriefgenerator
            <ToolButton $w={11} aria-label="Serienbriefgenerator schließen"><Cross /></ToolButton>
          </Tab>
        </TabBar>
        <Main>
          <Editor>
            <MainToolbar />
            <Sheet>
              <span />
              <Ruler count={25} />
              <Ruler vertical count={14} />
              <Paper>
                <Guide />
                <Guide $vertical />
                <DocField $x={39} $y={40}>
                  TestGS Staatliche Grundschule<br />Praterinsel 2<br />80538 München
                </DocField>
                <TitleField $x={141} $y={265}>Bestätigung über die Lehrtätigkeit</TitleField>
                <DocField $x={39} $y={382}>Hiermit wird bestätigt, dass</DocField>
                <SelectedField $x={271} $y={380}>
                  [Anrede], [vollständiger Name]
                  {[0, 1, 2].map((row) =>
                    [0, 1, 2].map((col) =>
                      row === 1 && col === 1 ? null : <Handle key={`${row}${col}`} $row={row} $col={col} />,
                    ),
                  )}
                </SelectedField>
              </Paper>
            </Sheet>
            <StatusBar>
              <StatusButton $w={55}>100%</StatusButton>
              <StatusButton $w={31} aria-label="Raster">
                <svg width="10" height="10" stroke="#444" aria-hidden="true">
                  <path d="M3 0v10M7 0v10M0 3h10M0 7h10" />
                </svg>
              </StatusButton>
              <ToolButton $w={16} aria-label="Nach links">
                <svg width="6" height="8" fill="none" stroke="#bbb" strokeWidth="1.500" aria-hidden="true">
                  <path d="M5 0.500L1.500 4L5 7.500" />
                </svg>
              </ToolButton>
            </StatusBar>
          </Editor>
          <SidePanel />
        </Main>
      </Frame>
      <FieldDialog />
    </Window>
  );
}
